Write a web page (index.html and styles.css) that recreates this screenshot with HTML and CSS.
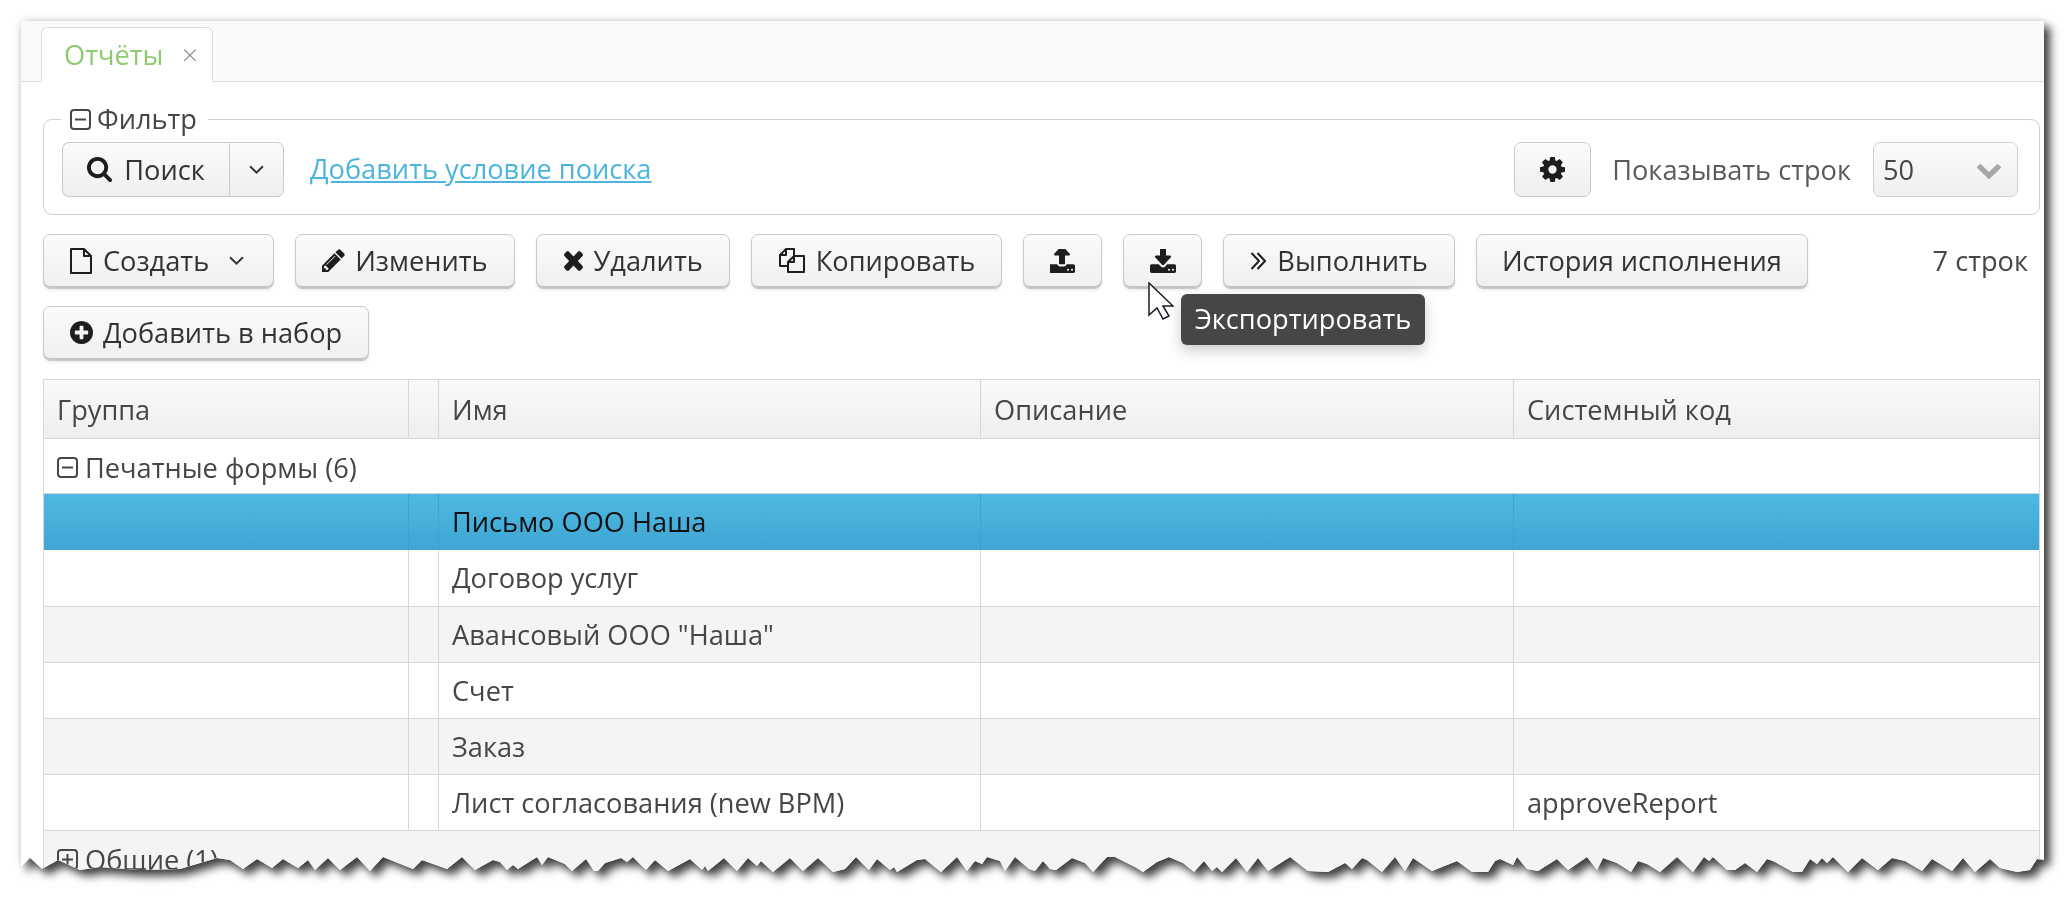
FILE: index.html
```html
<!DOCTYPE html>
<html lang="ru">
<head>
<meta charset="utf-8">
<title>Отчёты</title>
<link rel="stylesheet" href="styles.css">
</head>
<body>
<svg class="defs" aria-hidden="true">
  <symbol id="i-search" viewBox="64 128 1664 1664"><path d="M1216 832q0-185-131.500-316.500t-316.500-131.500-316.500 131.500-131.500 316.500 131.500 316.500 316.500 131.500 316.500-131.500 131.500-316.500zm512 832q0 52-38 90t-90 38q-54 0-90-38l-343-342q-179 124-399 124-143 0-273.500-55.500t-225-150-150-225-55.500-273.500 55.500-273.500 150-225 225-150 273.500-55.500 273.500 55.500 225 150 150 225 55.500 273.500q0 220-124 399l343 343q37 37 37 90z"/></symbol>
  <symbol id="i-cog" viewBox="128 128 1536 1536"><path d="M1152 896q0-106-75-181t-181-75-181 75-75 181 75 181 181 75 181-75 75-181zm512-109v222q0 12-8 23t-20 13l-185 28q-19 54-39 91 35 50 107 138 10 12 10 25t-9 23q-27 37-99 108t-94 71q-12 0-26-9l-138-108q-44 23-91 38-16 136-29 186-7 28-36 28h-222q-14 0-24.500-8.500t-11.500-21.500l-28-184q-49-16-90-37l-141 107q-10 9-25 9-14 0-25-11-126-114-165-168-7-10-7-23 0-12 8-23 15-21 51-66.500t54-70.500q-27-50-41-99l-183-27q-13-2-21-12.500t-8-23.500v-222q0-12 8-23t19-13l186-28q14-46 39-92-40-57-107-138-10-12-10-24 0-10 9-23 26-36 98.500-107.500t94.500-71.500q13 0 26 10l138 107q44-23 91-38 16-136 29-186 7-28 36-28h222q14 0 24.500 8.500t11.500 21.500l28 184q49 16 90 37l142-107q9-9 24-9 13 0 25 10 129 119 165 170 7 8 7 22 0 12-8 23-15 21-51 66.500t-54 70.500q26 50 41 98l183 28q13 2 21 12.500t8 23.500z"/></symbol>
  <symbol id="i-pencil" viewBox="128 128 1536 1536"><path d="M491 1536l91-91-235-235-91 91v107h128v128h107zm523-928q0-22-22-22-10 0-17 7l-542 542q-7 7-7 17 0 22 22 22 10 0 17-7l542-542q7-7 7-17zm-54-192l416 416-832 832h-416v-416zm683 96q0 53-37 90l-166 166-416-416 166-165q36-38 90-38 53 0 91 38l235 234q37 39 37 91z"/></symbol>
  <symbol id="i-times" viewBox="302 302 1188 1252" preserveAspectRatio="none"><path d="M1490 1322q0 40-28 68l-136 136q-28 28-68 28t-68-28l-294-294-294 294q-28 28-68 28t-68-28l-136-136q-28-28-28-68t28-68l294-294-294-294q-28-28-28-68t28-68l136-136q28-28 68-28t68 28l294 294 294-294q28-28 68-28t68 28l136 136q28 28 28 68t-28 68l-294 294 294 294q28 28 28 68z"/></symbol>
  <symbol id="i-plus" viewBox="128 128 1536 1536"><path d="M1344 960v-128q0-26-19-45t-45-19h-256v-256q0-26-19-45t-45-19h-128q-26 0-45 19t-19 45v256h-256q-26 0-45 19t-19 45v128q0 26 19 45t45 19h256v256q0 26 19 45t45 19h128q26 0 45-19t19-45v-256h256q26 0 45-19t19-45zm320-64q0 209-103 385.500t-279.500 279.500-385.500 103-385.500-103-279.500-279.500-103-385.500 103-385.500 279.500-279.500 385.500-103 385.500 103 279.500 279.500 103 385.500z"/></symbol>
  <symbol id="i-upload" viewBox="64 128 1664 1408" preserveAspectRatio="none"><path d="M1280 1344q0-26-19-45t-45-19-45 19-19 45 19 45 45 19 45-19 19-45zm256 0q0-26-19-45t-45-19-45 19-19 45 19 45 45 19 45-19 19-45zm128-224v320q0 40-28 68t-68 28h-1472q-40 0-68-28t-28-68v-320q0-40 28-68t68-28h427q21 56 70.500 92t110.500 36h256q61 0 110.500-36t70.500-92h427q40 0 68 28t28 68zm-325-648q-17 40-59 40h-256v448q0 26-19 45t-45 19h-256q-26 0-45-19t-19-45v-448h-256q-42 0-59-40-17-39 14-69l448-448q18-19 45-19t45 19l448 448q31 30 14 69z"/></symbol>
  <symbol id="i-download" viewBox="64 128 1664 1408" preserveAspectRatio="none"><path d="M1344 1344q0-26-19-45t-45-19-45 19-19 45 19 45 45 19 45-19 19-45zm256 0q0-26-19-45t-45-19-45 19-19 45 19 45 45 19 45-19 19-45zm128-224v320q0 40-28 68t-68 28h-1472q-40 0-68-28t-28-68v-320q0-40 28-68t68-28h465l135 136q58 56 136 56t136-56l136-136h464q40 0 68 28t28 68zm-325-569q17 41-14 70l-448 448q-18 19-45 19t-45-19l-448-448q-31-29-14-70 17-39 59-39h256v-448q0-26 19-45t45-19h256q26 0 45 19t19 45v448h256q42 0 59 39z"/></symbol>
  <symbol id="i-chevron" viewBox="96 320 1600 1250" preserveAspectRatio="none"><path d="M1683 808l-742 741q-19 19-45 19t-45-19l-742-741q-19-19-19-45.500t19-45.500l166-165q19-19 45-19t45 19l531 531 531-531q19-19 45-19t45 19l166 165q19 19 19 45.500t-19 45.500z"/></symbol>
  <symbol id="i-angle" viewBox="0 0 14 9"><path d="M1 1l6 6 6-6" fill="none" stroke="currentColor" stroke-width="1.800"/></symbol>
  <symbol id="i-angles" viewBox="0 0 16 18"><path d="M1.500 1l7.500 8-7.500 8M7.500 1l7.500 8-7.500 8" fill="none" stroke="currentColor" stroke-width="2"/></symbol>
  <symbol id="i-file" viewBox="0 0 22 26"><path d="M1 1h13l7 7v17H1zM14 1v7h7" fill="none" stroke="currentColor" stroke-width="2" stroke-linejoin="round"/></symbol>
  <symbol id="i-copy" viewBox="0 0 27 25"><path d="M9 18H2V7l6-6h8v7" fill="none" stroke="currentColor" stroke-width="2" stroke-linejoin="round"/><path d="M8 1v6H2" fill="none" stroke="currentColor" stroke-width="2" stroke-linejoin="round"/><path d="M10 24V14l6-6h10v16zM16 8v6h-6" fill="none" stroke="currentColor" stroke-width="2" stroke-linejoin="round"/></symbol>
  <symbol id="i-minus-box" viewBox="0 0 21 21"><rect x="1" y="1" width="19" height="19" rx="3" fill="none" stroke="currentColor" stroke-width="2"/><path d="M5 10.500h11" stroke="currentColor" stroke-width="2"/></symbol>
  <symbol id="i-plus-box" viewBox="0 0 21 21"><rect x="1" y="1" width="19" height="19" rx="3" fill="none" stroke="currentColor" stroke-width="2"/><path d="M5 10.500h11M10.500 5v11" stroke="currentColor" stroke-width="2"/></symbol>
</svg>

<div class="sheet-shadow">
  <div class="sheet">
    <main class="panel">
      <nav class="tabbar">
        <div class="tab">
          <span class="tab-label">Отчёты</span>
          <span class="tab-close">×</span>
        </div>
      </nav>

      <div class="content">
        <fieldset class="filter">
          <legend class="filter-legend">
            <svg class="ic-box"><use href="#i-minus-box"/></svg>
            <span>Фильтр</span>
          </legend>
          <div class="filter-row">
            <div class="split">
              <button class="btn flat split-main"><svg class="ic ic-search"><use href="#i-search"/></svg>Поиск</button>
              <button class="btn flat split-arrow"><svg class="ic-angle"><use href="#i-angle"/></svg></button>
            </div>
            <a class="link" href="#">Добавить условие поиска</a>
            <div class="filter-right">
              <button class="btn flat btn-gear"><svg class="ic ic-cog"><use href="#i-cog"/></svg></button>
              <span class="rows-label">Показывать строк</span>
              <div class="select">
                <span>50</span>
                <svg class="ic-chevron"><use href="#i-chevron"/></svg>
              </div>
            </div>
          </div>
        </fieldset>

        <div class="toolbar">
          <div class="toolbar-row">
            <button class="btn"><svg class="ic ic-file"><use href="#i-file"/></svg>Создать<svg class="ic-angle ic-angle-after"><use href="#i-angle"/></svg></button>
            <button class="btn"><svg class="ic ic-pencil"><use href="#i-pencil"/></svg>Изменить</button>
            <button class="btn"><svg class="ic ic-times"><use href="#i-times"/></svg>Удалить</button>
            <button class="btn"><svg class="ic ic-copy"><use href="#i-copy"/></svg>Копировать</button>
            <button class="btn btn-icon"><svg class="ic ic-updown"><use href="#i-upload"/></svg></button>
            <button class="btn btn-icon"><svg class="ic ic-updown"><use href="#i-download"/></svg></button>
            <button class="btn"><svg class="ic ic-angles"><use href="#i-angles"/></svg>Выполнить</button>
            <button class="btn btn-text">История исполнения</button>
            <span class="row-count">7 строк</span>
          </div>
          <div class="toolbar-row">
            <button class="btn"><svg class="ic ic-plus"><use href="#i-plus"/></svg>Добавить в набор</button>
          </div>
        </div>

        <div class="grid">
          <div class="row head">
            <div class="cell">Группа</div><div class="cell"></div><div class="cell">Имя</div><div class="cell">Описание</div><div class="cell">Системный код</div>
          </div>
          <div class="row group"><div class="cell"><svg class="ic-box"><use href="#i-minus-box"/></svg>Печатные формы (6)</div></div>
          <div class="row selected"><div class="cell"></div><div class="cell"></div><div class="cell">Письмо ООО Наша</div><div class="cell"></div><div class="cell"></div></div>
          <div class="row"><div class="cell"></div><div class="cell"></div><div class="cell">Договор услуг</div><div class="cell"></div><div class="cell"></div></div>
          <div class="row alt"><div class="cell"></div><div class="cell"></div><div class="cell">Авансовый ООО "Наша"</div><div class="cell"></div><div class="cell"></div></div>
          <div class="row"><div class="cell"></div><div class="cell"></div><div class="cell">Счет</div><div class="cell"></div><div class="cell"></div></div>
          <div class="row alt"><div class="cell"></div><div class="cell"></div><div class="cell">Заказ</div><div class="cell"></div><div class="cell"></div></div>
          <div class="row"><div class="cell"></div><div class="cell"></div><div class="cell">Лист согласования (new BPM)</div><div class="cell"></div><div class="cell">approveReport</div></div>
          <div class="row group alt"><div class="cell"><svg class="ic-box"><use href="#i-plus-box"/></svg>Общие (1)</div></div>
        </div>
      </div>

      <svg class="cursor" viewBox="0 0 26 38"><path d="M1 1v32l8-7 6 11 6-3-6-10h10z" fill="#fff" stroke="#1b1b2b" stroke-width="1.500" stroke-linejoin="miter"/></svg>
      <div class="tooltip">Экспортировать</div>
    </main>
  </div>
</div>
</body>
</html>
```

FILE: styles.css
```css
* { box-sizing: border-box; }

html, body {
  margin: 0;
  height: 899px;
  overflow: hidden;
  background: #fff;
}

body {
  font-family: "Open Sans", "Noto Sans", sans-serif;
  font-size: 27.2px;
  color: #464646;
}

.defs { display: none; }

.sheet-shadow {
  height: 899px;
  filter: drop-shadow(0 0 4px rgba(0, 0, 0, .16)) drop-shadow(6px 6px 4px rgba(0, 0, 0, .72));
}

.sheet {
  height: 899px;
  padding: 21px 21px 0;
  clip-path: polygon(
    21px 21px, 21px 866px,
    22px 866px,30px 858px,42px 869px,58px 860px,80px 870px,100px 867px,140px 870px,180px 869px,217px 858px,230px 860px,243px 869px,257px 859px,272px 868px,283px 859px,298px 868px,308px 860px,315px 870px,328px 858px,340px 870px,357px 857px,370px 871px,383px 857px,413px 869px,422px 860px,447px 869px,462px 857px,475px 870px,493px 860px,
    500px 862px,507px 870px,513px 865px,518px 869px,537px 857px,542px 865px,548px 857px,565px 864px,572px 871px,586px 859px,594px 871px,598px 871px,605px 863px,621px 858px,627px 862px,633px 857px,646px 870px,655px 860px,668px 871px,690px 859px,702px 870px,705px 866px,708px 871px,724px 858px,737px 871px,748px 858px,757px 866px,761px 861px,773px 872px,790px 858px,803px 871px,818px 858px,833px 872px,845px 869px,856px 857px,869px 870px,877px 859px,890px 870px,894px 867px,897px 872px,917px 860px,925px 859px,941px 872px,957px 857px,967px 871px,975px 861px,982px 864px,987px 857px,1000px 861px,
    1005px 871px,1015px 857px,1029px 869px,1035px 871px,1043px 861px,1050px 869px,1056px 870px,1072px 858px,1085px 863px,1093px 872px,1107px 857px,1115px 857px,1135px 867px,1143px 872px,1157px 862px,1169px 857px,1183px 863px,1194px 872px,1204px 861px,1212px 871px,1217px 867px,1222px 872px,1236px 858px,1247px 872px,1258px 858px,1268px 871px,1290px 857px,1308px 871px,1328px 872px,1345px 863px,1352px 869px,1362px 858px,1367px 860px,1382px 872px,1395px 857px,1405px 871px,1413px 858px,1432px 871px,1457px 861px,1472px 872px,1488px 872px,1495px 861px,
    1500px 859px,1513px 865px,1517px 857px,1527px 869px,1538px 871px,1557px 859px,1568px 870px,1587px 857px,1597px 870px,1603px 858px,1617px 863px,1631px 872px,1638px 861px,1647px 864px,1660px 872px,1677px 857px,1693px 872px,1704px 857px,1709px 861px,1713px 857px,1727px 870px,1735px 870px,1745px 863px,1757px 872px,1767px 859px,1773px 861px,1793px 872px,1802px 872px,1810px 859px,1817px 864px,1822px 858px,1827px 863px,1833px 857px,1848px 872px,1862px 858px,1878px 870px,1892px 858px,1905px 861px,1922px 871px,1932px 859px,1952px 871px,1963px 858px,1975px 872px,1990px 859px,2000px 868px,2017px 872px,2030px 870px,2037px 859px,2044px 860px,
    2044px 21px
  );
}

.panel {
  position: relative;
  height: 878px;
  background: #fff;
}

/* tabs */
.tabbar {
  display: flex;
  height: 61px;
  padding: 6px 0 0 20px;
  background: #fafafa;
  border-bottom: 1px solid #dfdfdf;
}

.tab {
  display: flex;
  align-items: center;
  width: 172px;
  height: 55px;
  padding: 0 14px 2px 22px;
  background: #fff;
  border: 1px solid #dfdfdf;
  border-bottom: 0;
  border-radius: 6px 6px 0 0;
}

.tab-label { color: #8fca6e; }

.tab-close {
  margin-left: auto;
  font-size: 28px;
  font-weight: 300;
  color: #8a8a8a;
}

/* content */
.content { padding: 20px 4px 0 22px; }

.filter {
  margin: 0;
  min-width: 0;
  padding: 6px 21px 17px 18px;
  border: 1px solid #cfcfcf;
  border-radius: 9px;
}

.filter-legend {
  display: flex;
  align-items: center;
  gap: 6px;
  height: 34px;
  margin-left: -1px;
  padding: 0 11px 0 9px;
  line-height: 34px;
}

.ic-box {
  width: 21px;
  height: 21px;
  flex: none;
  color: #464646;
}

.filter-row {
  display: flex;
  align-items: center;
}

.filter-right {
  display: flex;
  align-items: center;
  margin-left: auto;
}

.split { display: flex; }

.btn {
  display: inline-flex;
  align-items: center;
  justify-content: center;
  height: 55px;
  padding: 0 26px 2px;
  font: inherit;
  color: #333;
  background: linear-gradient(#fbfbfb, #efefef);
  border: 1px solid #c9c9c9;
  border-radius: 7px;
  box-shadow: inset 0 -2px 0 #c4c4c4, 0 2px 3px rgba(0, 0, 0, .06);
  white-space: nowrap;
}

.btn.flat {
  padding-bottom: 0;
  box-shadow: inset 0 1px 0 #fff;
}

.split-main {
  width: 167px;
  padding: 0;
  border-right-width: 0;
  border-radius: 7px 0 0 7px;
}

.split-arrow {
  width: 55px;
  padding: 0;
  border-radius: 0 7px 7px 0;
}

.ic {
  flex: none;
  fill: #1d1d1d;
  color: #1d1d1d;
}

.ic-search { width: 25px; height: 25px; margin-right: 12px; }
.ic-cog { width: 25px; height: 25px; }
.ic-pencil { width: 23px; height: 23px; margin-right: 10px; }
.ic-times { width: 19px; height: 21px; margin: 0 11px 0 1px; }
.ic-file { width: 22px; height: 26px; margin-right: 11px; }
.ic-copy { width: 27px; height: 25px; margin-right: 11px; }
.ic-plus { width: 23px; height: 23px; margin-right: 10px; }
.ic-updown { width: 26px; height: 24px; }
.ic-angles { width: 16px; height: 18px; margin-right: 11px; }

.ic-angle {
  width: 15px;
  height: 10px;
  color: #333;
}

.ic-angle-after { margin: 0 3px 0 20px; }

.btn-gear { width: 77px; padding: 0; }
.btn-icon { width: 79px; padding: 0 0 2px; }
.btn-text { padding: 0 25px 2px; }

.link {
  margin-left: 26px;
  padding-bottom: 2px;
  color: #4bb5dd;
}

.rows-label {
  margin: 0 22px 0 21px;
  color: #5a5a5a;
}

.select {
  display: flex;
  align-items: center;
  justify-content: space-between;
  width: 145px;
  height: 55px;
  padding: 0 16px 0 9px;
  background: linear-gradient(#fbfbfb, #efefef);
  border: 1px solid #d0d0d0;
  border-radius: 7px;
}

.ic-chevron {
  width: 24px;
  height: 18px;
  fill: #a8a8a8;
}

/* toolbar */
.toolbar {
  display: flex;
  flex-direction: column;
  gap: 17px;
  margin-top: 19px;
}

.toolbar-row {
  display: flex;
  align-items: center;
  gap: 21px;
}

.row-count {
  margin-left: auto;
  padding: 0 12px 2px 0;
}

/* grid */
.grid {
  margin-top: 18px;
  border: 1px solid #d6d6d6;
  border-bottom: 0;
}

.row {
  display: grid;
  grid-template-columns: 364px 30px 542px 533px 1fr;
  height: 56.2px;
  background: #fff;
  border-bottom: 1px solid #d6d6d6;
}

.row.alt { background: #f4f4f4; }

.row.head {
  height: 59px;
  background: linear-gradient(#fafafa, #eeeeee);
}

.head + .group { height: 55.2px; }

.row.selected {
  color: #111;
  background: linear-gradient(#4eb9e2, #3fa6d3);
  border-bottom-color: #3fa6d3;
}

.cell {
  display: flex;
  align-items: center;
  min-width: 0;
  padding: 0 13px;
  border-left: 1px solid #d6d6d6;
  white-space: nowrap;
}

.cell:first-child {
  padding-left: 13px;
  border-left: 0;
}

.selected .cell { border-color: #3da3cf; }

.group { grid-template-columns: 1fr; }
.group .cell { gap: 7px; padding-top: 2px; }

/* overlays */
.tooltip {
  position: absolute;
  left: 1160px;
  top: 273px;
  display: flex;
  align-items: center;
  justify-content: center;
  width: 244px;
  height: 51px;
  padding-bottom: 2px;
  color: #fff;
  background: #464646;
  border-radius: 6px;
  box-shadow: 0 6px 14px rgba(0, 0, 0, .2);
}

.cursor {
  position: absolute;
  left: 1127px;
  top: 261px;
  z-index: 2;
  width: 26px;
  height: 38px;
}
```
